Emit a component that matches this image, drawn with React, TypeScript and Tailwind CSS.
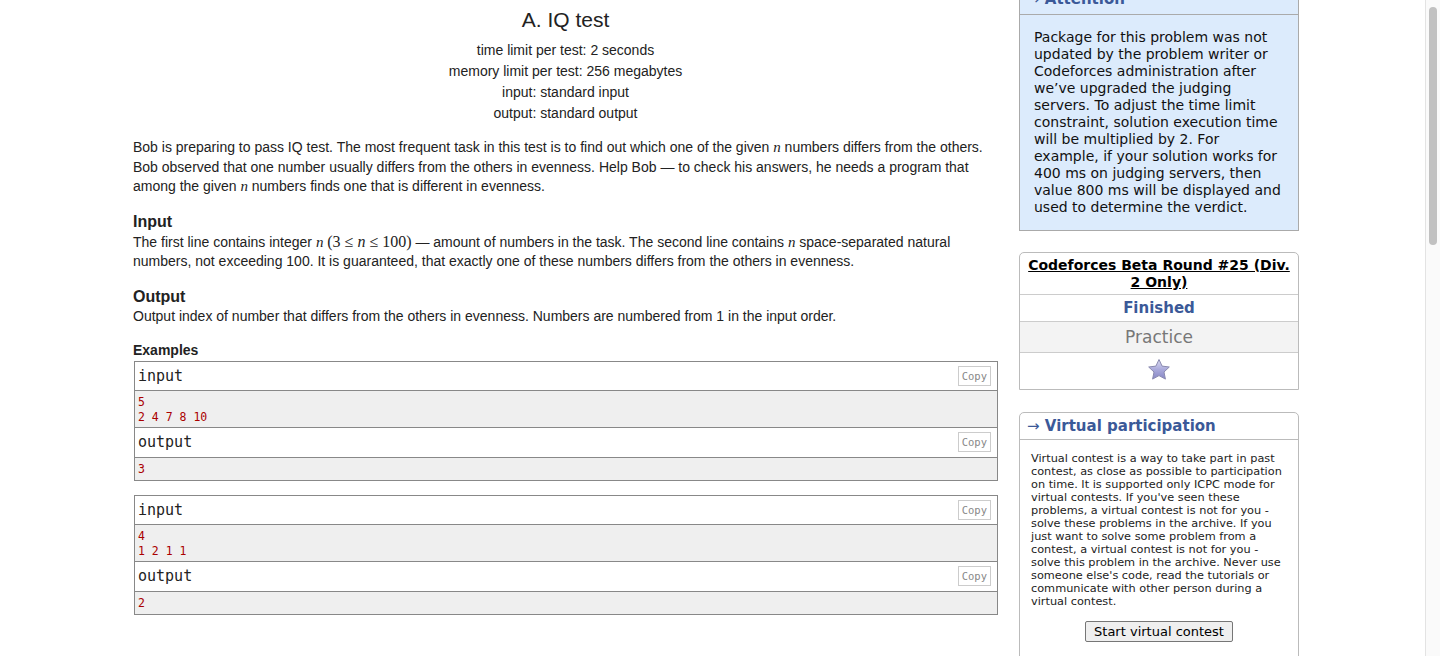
import React from "react";

const sans = "font-['Liberation_Sans',Arial,sans-serif]";
const verdana = "font-['DejaVu_Sans',Verdana,sans-serif]";
const mono = "font-['DejaVu_Sans_Mono',Consolas,monospace]";

function N() {
  return <span className="font-['Liberation_Serif',serif] italic text-[15px]">n</span>;
}

function CopyButton() {
  return (
    <span className={`${mono} text-[10.5px] leading-[18px] text-[#888] border border-[#ccc] bg-white px-[3px] h-[20px] mt-[4px] mr-[6px]`}>
      Copy
    </span>
  );
}

function Example({ input, output }: { input: string[]; output: string[] }) {
  return (
    <div className="border border-[#888]">
      <div className="flex justify-between h-[29px] border-b border-[#888]">
        <span className={`${mono} text-[15px] leading-[28px] pl-[3px]`}>input</span>
        <CopyButton />
      </div>
      <div className={`${mono} bg-[#efefef] text-[#a00] text-[11.5px] leading-[15px] pl-[3px] pt-[4px] h-[37px] border-b border-[#888]`}>
        {input.map((l, i) => (
          <div key={i}>{l}</div>
        ))}
      </div>
      <div className="flex justify-between h-[30px] border-b border-[#888]">
        <span className={`${mono} text-[15px] leading-[29px] pl-[3px]`}>output</span>
        <CopyButton />
      </div>
      <div className={`${mono} bg-[#efefef] text-[#a00] text-[11.5px] leading-[15px] pl-[3px] pt-[4px] h-[22px]`}>
        {output.map((l, i) => (
          <div key={i}>{l}</div>
        ))}
      </div>
    </div>
  );
}

function Star() {
  return (
    <svg width="24" height="23" viewBox="0 0 24 23">
      <defs>
        <linearGradient id="sg" x1="0" y1="0" x2="0" y2="1">
          <stop offset="0" stopColor="#dcdcf2" />
          <stop offset="0.5" stopColor="#ababdc" />
          <stop offset="1" stopColor="#8686c4" />
        </linearGradient>
      </defs>
      <path
        d="M12 1.5l3.1 6.6 7.2.9-5.3 5 1.4 7.1L12 17.6l-6.4 3.5 1.4-7.1-5.3-5 7.2-.9z"
        fill="url(#sg)"
        stroke="#8a8ab0"
        strokeWidth="1"
        strokeLinejoin="round"
      />
    </svg>
  );
}

export default function App() {
  return (
    <div className="flex h-[656px] w-[1440px] overflow-hidden bg-white">
      <div className="flex flex-1 pl-[133px]">
        {/* Problem statement */}
        <div className={`${sans} w-[865px] text-[14px] text-[#222]`}>
          <div className="text-center text-[21px] leading-[28px] pt-[6px]">A. IQ test</div>
          <div className="text-center leading-[21px] mt-[6px]">
            <div>time limit per test: 2 seconds</div>
            <div>memory limit per test: 256 megabytes</div>
            <div>input: standard input</div>
            <div>output: standard output</div>
          </div>
          <p className="leading-[19.5px] mt-[14px]">
            Bob is preparing to pass IQ test. The most frequent task in this test is to find out which one of the given <N /> numbers differs from the others. Bob observed that one number usually differs from the others in evenness. Help Bob — to check his answers, he needs a program that among the given <N /> numbers finds one that is different in evenness.
          </p>
          <div className="font-bold text-[16px] leading-[20px] mt-[15px]">Input</div>
          <p className="leading-[19.5px]">
            The first line contains integer <N />{" "}
            <span className="font-['Liberation_Serif',serif] text-[16px]">
              (3 ≤ <span className="italic">n</span> ≤ 100)
            </span>{" "}
            — amount of numbers in the task. The second line contains <N /> space-separated natural numbers, not exceeding 100. It is guaranteed, that exactly one of these numbers differs from the others in evenness.
          </p>
          <div className="font-bold text-[16px] leading-[20px] mt-[15px]">Output</div>
          <p className="leading-[19.5px]">
            Output index of number that differs from the others in evenness. Numbers are numbered from 1 in the input order.
          </p>
          <div className="font-bold text-[14px] leading-[20px] mt-[14px]">Examples</div>
          <div className="flex flex-col gap-[14px] mt-[1px] pl-[1px]">
            <Example input={["5", "2 4 7 8 10"]} output={["3"]} />
            <Example input={["4", "1 2 1 1"]} output={["2"]} />
          </div>
        </div>

        {/* Sidebar */}
        <div className={`${verdana} w-[280px] ml-[21px] -mt-[15px] flex flex-col`}>
          <div className="border border-[#aaa] bg-[#dcebfc]">
            <div className="h-[29px] border-b border-[#aaa] pl-[7px] text-[#3b5998] font-bold text-[15px] leading-[26px]">
              <span className="font-normal">→</span> Attention
            </div>
            <div className="px-[14px] pt-[14px] pb-[14px] text-[14px] leading-[17px] text-[#111]">
              Package for this problem was not updated by the problem writer or Codeforces administration after we’ve upgraded the judging servers. To adjust the time limit constraint, solution execution time will be multiplied by 2. For example, if your solution works for 400 ms on judging servers, then value 800 ms will be displayed and used to determine the verdict.
            </div>
          </div>

          <div className="mt-[21px] border border-[#bbb] rounded-t-[5px] text-center">
            <div className="px-[6px] pt-[4px] pb-[3px] border-b border-[#ccc] text-[14px] leading-[17px] font-bold underline text-black">
              Codeforces Beta Round #25 (Div. 2 Only)
            </div>
            <div className="h-[27px] border-b border-[#ccc] text-[15px] leading-[27px] font-bold text-[#3b5998]">
              Finished
            </div>
            <div className="h-[31px] border-b border-[#ccc] bg-[#f3f3f3] text-[17px] leading-[30px] text-[#777]">
              Practice
            </div>
            <div className="h-[36px] flex items-center justify-center pb-[3px]">
              <Star />
            </div>
          </div>

          <div className="mt-[22px] border border-[#bbb] rounded-t-[5px]">
            <div className="h-[27px] border-b border-[#bbb] pl-[7px] text-[#3b5998] font-bold text-[15px] leading-[26px]">
              <span className="font-normal">→</span> Virtual participation
            </div>
            <div className="px-[11px] pt-[12px] text-[11.3px] leading-[13px] text-[#222]">
              Virtual contest is a way to take part in past contest, as close as possible to participation on time. It is supported only ICPC mode for virtual contests. If you've seen these problems, a virtual contest is not for you - solve these problems in the archive. If you just want to solve some problem from a contest, a virtual contest is not for you - solve this problem in the archive. Never use someone else's code, read the tutorials or communicate with other person during a virtual contest.
            </div>
            <div className="flex justify-center mt-[13px] pb-[16px]">
              <button className="h-[21px] px-[8px] text-[13px] leading-[19px] text-black bg-[#efefef] border border-[#767676] rounded-[2px]">
                Start virtual contest
              </button>
            </div>
          </div>
        </div>
      </div>

      {/* Scrollbar */}
      <div className="w-[15px] border-l border-[#e3e3e3] bg-[#fafafa] pl-[3px] pt-[7px]">
        <div className="w-[8px] h-[238px] rounded-full bg-[#c1c1c1]" />
      </div>
    </div>
  );
}
